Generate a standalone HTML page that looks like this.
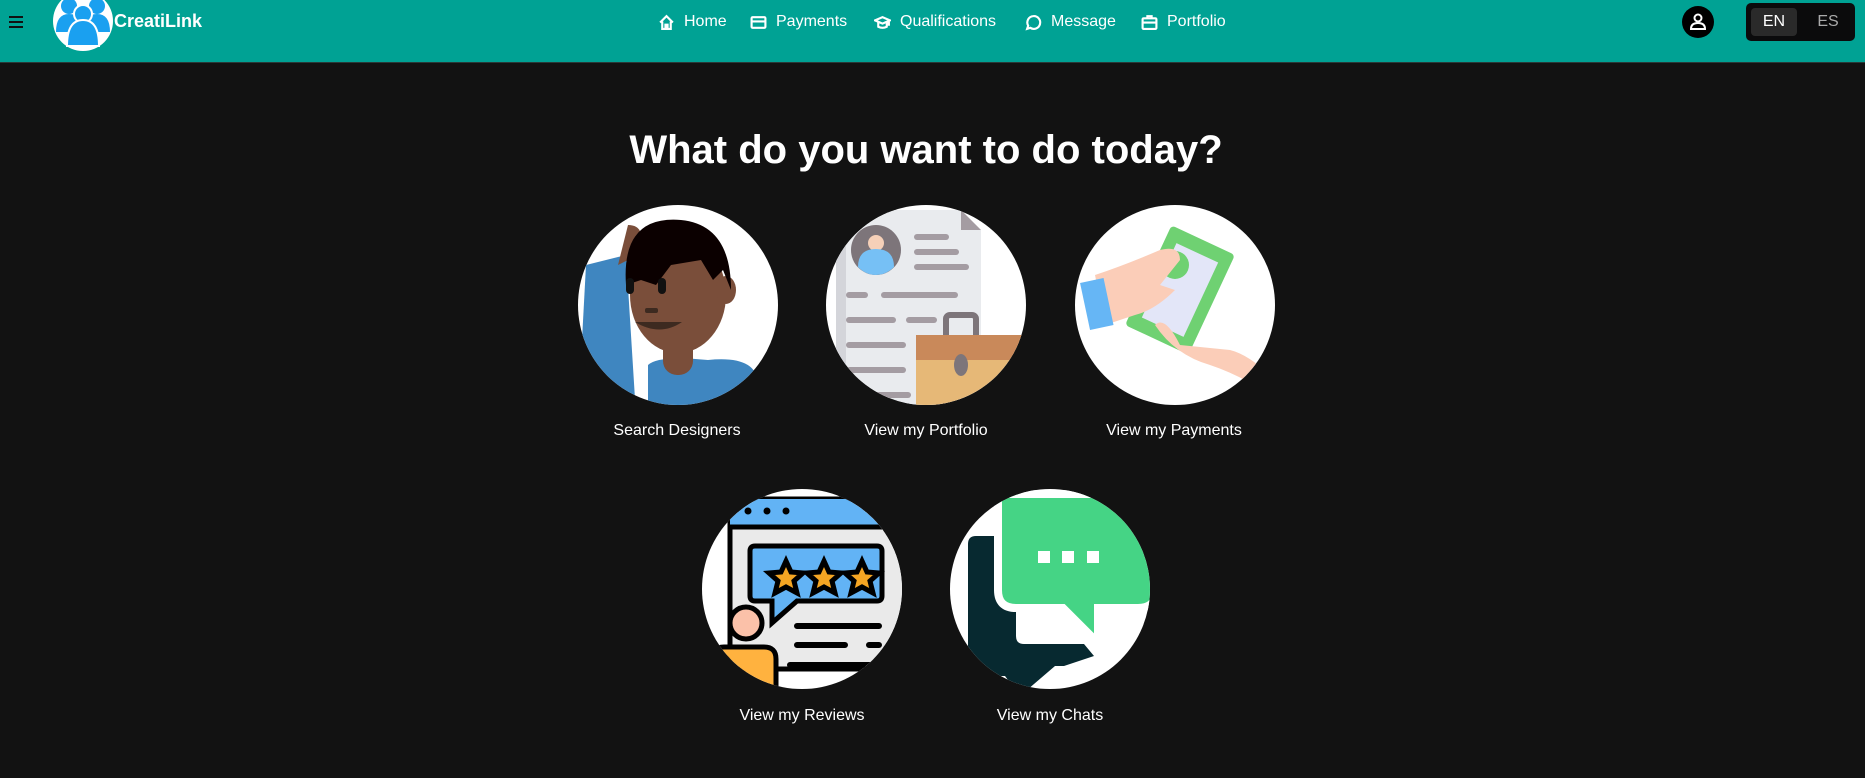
<!DOCTYPE html>
<html><head><meta charset="utf-8"><style>
*{margin:0;padding:0;box-sizing:border-box}
body{width:1865px;height:778px;background:#121212;font-family:"Liberation Sans",sans-serif;overflow:hidden;position:relative;color:#fff}
.hdr{position:absolute;left:0;top:0;width:1865px;height:63px;background:#00a294;border-bottom:1px solid #2a3a38}
.nav{position:absolute;top:13px;font-size:16px;color:#fff;display:flex;align-items:center;gap:9px}
.nav svg{width:17px;height:17px;fill:none;stroke:#fff;stroke-width:2}
h1{position:absolute;top:128px;left:0;width:1852px;text-align:center;font-size:40px;font-weight:bold}
.c{position:absolute;width:200px;height:200px;border-radius:50%;background:#fff;overflow:hidden}
.c svg{width:200px;height:200px;display:block}
.l{position:absolute;width:240px;text-align:center;font-size:16px}
</style></head><body>
<div class="hdr">
<svg style="position:absolute;left:8px;top:15px" width="16" height="14"><path d="M1 2h14M1 7h14M1 12h14" stroke="#111" stroke-width="2"/></svg>
<svg style="position:absolute;left:52px;top:-10px" width="62" height="62"><ellipse cx="31" cy="31" rx="30" ry="30" fill="#fff"/><circle cx="17" cy="16" r="8" fill="#1aa0f0"/><circle cx="45" cy="16" r="8" fill="#1aa0f0"/><path d="M4 42q0-18 13-18t13 18z" fill="#1aa0f0"/><path d="M32 42q0-18 13-18t13 18z" fill="#1aa0f0"/><circle cx="31" cy="24" r="9" fill="#1aa0f0" stroke="#fff" stroke-width="2"/><path d="M15 56q0-26 16-26t16 26z" fill="#1aa0f0" stroke="#fff" stroke-width="2"/></svg>
<div style="position:absolute;left:114px;top:11px;font-size:18px;font-weight:bold">CreatiLink</div>
<div class="nav" style="left:658px"><svg viewBox="0 0 16 16"><path d="M2 8L8 2l6 6M4 7v7h8V7M7 14v-4h2v4"/></svg>Home</div>
<div class="nav" style="left:750px"><svg viewBox="0 0 16 16"><rect x="1.5" y="3" width="13" height="10" rx="1"/><path d="M1.5 7h13"/></svg>Payments</div>
<div class="nav" style="left:874px"><svg viewBox="0 0 16 16"><path d="M1 6l7-3 7 3-7 3zM4 8v4q4 2 8 0V8M14 6v5"/></svg>Qualifications</div>
<div class="nav" style="left:1025px"><svg viewBox="0 0 16 16"><path d="M8 2a6 6 0 1 1-3 11l-3 1 1-3A6 6 0 0 1 8 2z"/></svg>Message</div>
<div class="nav" style="left:1141px"><svg viewBox="0 0 16 16"><rect x="1.5" y="4" width="13" height="10" rx="1"/><path d="M6 4V2h4v2M1.5 8h13M8 7v2"/></svg>Portfolio</div>
<svg style="position:absolute;left:1682px;top:6px" width="32" height="32"><circle cx="16" cy="16" r="16" fill="#000"/><circle cx="16" cy="12" r="3.5" fill="none" stroke="#fff" stroke-width="2"/><path d="M9 23q0-6 7-6t7 6z" fill="none" stroke="#fff" stroke-width="2"/></svg>
<div style="position:absolute;left:1746px;top:3px;width:109px;height:38px;background:#0b0b0c;border-radius:5px">
<div style="position:absolute;left:5px;top:5px;width:46px;height:28px;background:#2a2a2a;border-radius:4px;text-align:center;line-height:28px;font-size:16px">EN</div>
<div style="position:absolute;left:60px;top:5px;width:44px;height:28px;text-align:center;line-height:28px;font-size:16px;color:#aaa">ES</div>
</div>
</div>
<h1>What do you want to do today?</h1>

<div class="c" style="left:578px;top:205px"><svg viewBox="0 0 200 200">
<path d="M8 60l40-10 10 160H0z" fill="#3f86c0"/><path d="M50 20q20 0 10 30L40 60z" fill="#7a4e3a"/>
<path d="M70 160q10-10 60-5 50-5 50 25v30H70z" fill="#3f86c0"/>
<rect x="85" y="120" width="30" height="50" rx="14" fill="#7a4e3a"/>
<ellipse cx="100" cy="90" rx="48" ry="58" fill="#7a4e3a"/><ellipse cx="148" cy="85" rx="10" ry="14" fill="#7a4e3a"/>
<path d="M48 80q-5-70 55-65 50 5 50 70l-8-20-10 10-12-20-30 5-15 20-15-5z" fill="#0b0000"/>
<rect x="48" y="73" width="8" height="16" rx="4" fill="#111"/><rect x="80" y="73" width="8" height="16" rx="4" fill="#111"/>
<rect x="67" y="103" width="13" height="5" rx="2" fill="#3d2a20"/><path d="M57 117q25 15 47 0z" fill="#3d2a20"/>
</svg></div>
<div class="l" style="left:557px;top:422px">Search Designers</div>

<div class="c" style="left:826px;top:205px"><svg viewBox="0 0 200 200">
<path d="M10 5h125l20 20v180H10z" fill="#e9ebee"/><path d="M10 5h10v195H10z" fill="#d4d5da"/><path d="M135 5v20h20z" fill="#a49ca2"/>
<circle cx="50" cy="45" r="25" fill="#7d757a"/><circle cx="50" cy="38" r="8" fill="#f5d0b8"/><path d="M32 62q0-18 18-18t18 18q-8 8-18 8t-18-8z" fill="#76c0f5"/>
<g fill="#a49ca2"><rect x="88" y="29" width="35" height="6" rx="3"/><rect x="88" y="44" width="45" height="6" rx="3"/><rect x="88" y="59" width="55" height="6" rx="3"/>
<rect x="20" y="87" width="22" height="6" rx="3"/><rect x="55" y="87" width="77" height="6" rx="3"/><rect x="20" y="112" width="50" height="6" rx="3"/><rect x="80" y="112" width="31" height="6" rx="3"/>
<rect x="20" y="137" width="60" height="6" rx="3"/><rect x="20" y="162" width="60" height="6" rx="3"/><rect x="20" y="187" width="65" height="6" rx="3"/></g>
<rect x="120" y="110" width="30" height="25" rx="4" fill="none" stroke="#7d757a" stroke-width="6"/>
<rect x="90" y="130" width="110" height="80" rx="6" fill="#e6b877"/><rect x="90" y="130" width="110" height="25" fill="#c9895a"/>
<ellipse cx="135" cy="160" rx="7" ry="11" fill="#7d757a"/>
</svg></div>
<div class="l" style="left:806px;top:422px">View my Portfolio</div>

<div class="c" style="left:1075px;top:205px"><svg viewBox="0 0 200 200">
<rect x="70" y="30" width="70" height="110" rx="4" fill="#6fd172" transform="rotate(25 105 85)"/>
<rect x="82" y="44" width="46" height="82" fill="#e3e6f8" transform="rotate(25 105 85)"/>
<circle cx="100" cy="60" r="14" fill="#6fd172"/>
<path d="M20 70q30-10 65-25 20-5 20 10l-20 25 15 5q-20 20-40 25l-30 10z" fill="#fbcdb8"/>
<rect x="10" y="75" width="24" height="48" fill="#66b6f5" transform="rotate(-12 22 100)"/>
<path d="M80 120q20 30 55 40 30 10 60 30l5-15q-25-25-45-30l-50-5q-15-30-25-20z" fill="#fbcdb8"/>
<rect x="160" y="168" width="8" height="40" rx="3" fill="#e85353" transform="rotate(40 164 188)"/>
</svg></div>
<div class="l" style="left:1054px;top:422px">View my Payments</div>

<div class="c" style="left:702px;top:489px"><svg viewBox="0 0 200 200">
<rect x="28" y="10" width="190" height="170" fill="#eaeaea" stroke="#000" stroke-width="5"/>
<rect x="28" y="10" width="190" height="28" fill="#62b3f5"/><path d="M28 38h190" stroke="#000" stroke-width="5"/>
<circle cx="46" cy="22" r="3.5"/><circle cx="65" cy="22" r="3.5"/><circle cx="84" cy="22" r="3.5"/>
<path d="M48 62q0-5 5-5h122q5 0 5 5v45q0 5-5 5H95l-25 22v-22H53q-5 0-5-5z" fill="#62b3f5" stroke="#000" stroke-width="5"/>
<g fill="#f5a623" stroke="#000" stroke-width="5"><path d="M84 72l5 11 12 1-9 8 3 12-11-6-11 6 3-12-9-8 12-1z"/><path d="M122 72l5 11 12 1-9 8 3 12-11-6-11 6 3-12-9-8 12-1z"/><path d="M160 72l5 11 12 1-9 8 3 12-11-6-11 6 3-12-9-8 12-1z"/></g>
<g stroke="#000" stroke-width="6" stroke-linecap="round"><path d="M95 137h82M95 156h48M167 156h10M88 176h100"/></g>
<circle cx="44" cy="134" r="16" fill="#fbc1a9" stroke="#000" stroke-width="5"/>
<path d="M10 200v-30q0-12 12-12h40q12 0 12 12v30z" fill="#ffb23f" stroke="#000" stroke-width="5"/>
</svg></div>
<div class="l" style="left:682px;top:707px">View my Reviews</div>

<div class="c" style="left:950px;top:489px"><svg viewBox="0 0 200 200">
<path d="M18 55q0-8 8-8h40v100q0 8 8 8h60l10 12-30 10H105l-35 30-15-20H26q-8 0-8-8z" fill="#072930"/>
<path d="M48 5h140q18 0 18 18v78q0 18-18 18h-40v35l-35-35H66q-18 0-18-18z" fill="#45d485" stroke="#fff" stroke-width="8"/>
<rect x="88" y="62" width="12" height="12" fill="#fff"/><rect x="112" y="62" width="12" height="12" fill="#fff"/><rect x="137" y="62" width="12" height="12" fill="#fff"/>
</svg></div>
<div class="l" style="left:930px;top:707px">View my Chats</div>
</body></html>
